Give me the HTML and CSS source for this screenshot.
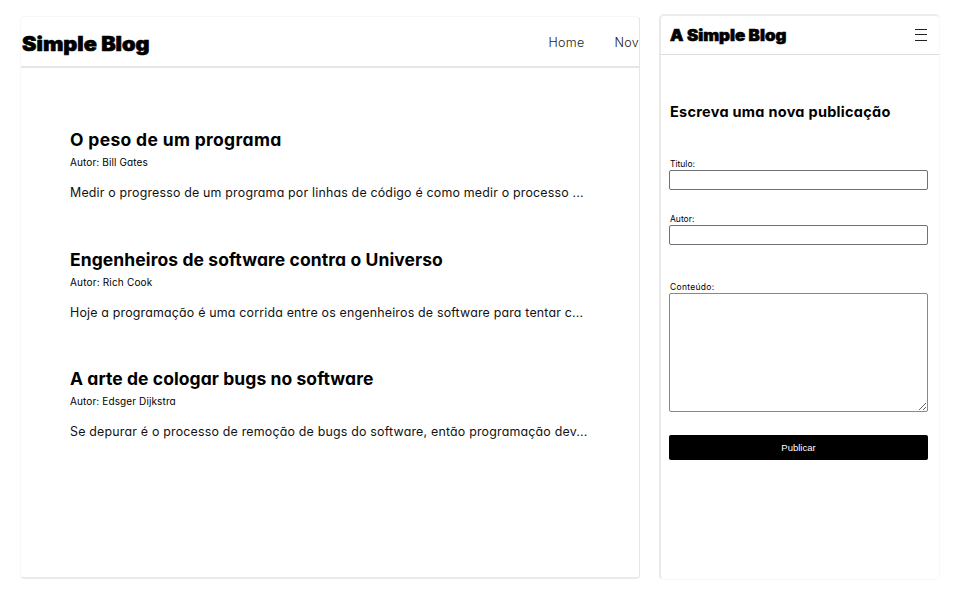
FILE: index.html
```html
<!DOCTYPE html>
<html lang="pt-BR">
<head>
<meta charset="utf-8">
<title>A Simple Blog</title>
<link rel="stylesheet" href="styles.css">
</head>
<body>
<main class="desktop">
  <header class="desktop-header">
    <h1 class="logo">Simple Blog</h1>
    <nav class="nav"><span>Home</span><span class="new">Novo</span></nav>
  </header>
  <section class="posts">
    <article class="post">
      <h2 class="t1">O peso de um programa</h2>
      <p class="author a1">Autor: Bill Gates</p>
      <p class="excerpt e1">Medir o progresso de um programa por linhas de código é como medir o processo ...</p>
    </article>
    <article class="post">
      <h2 class="t2">Engenheiros de software contra o Universo</h2>
      <p class="author a2">Autor: Rich Cook</p>
      <p class="excerpt e2">Hoje a programação é uma corrida entre os engenheiros de software para tentar c...</p>
    </article>
    <article class="post">
      <h2 class="t3">A arte de cologar bugs no software</h2>
      <p class="author a3">Autor: Edsger Dijkstra</p>
      <p class="excerpt e3">Se depurar é o processo de remoção de bugs do software, então programação dev...</p>
    </article>
  </section>
</main>
<aside class="mobile">
  <header class="mobile-header">
    <h1 class="logo small">A Simple Blog</h1>
    <svg class="menu" width="12" height="12" viewBox="0 0 12 12"><path d="M0 .5h12M0 5.5h12M0 11.5h12" stroke="#222" fill="none"/></svg>
  </header>
  <form class="form">
    <h2 class="form-title">Escreva uma nova publicação</h2>
    <label for="title">Titulo:</label>
    <input id="title" type="text">
    <label for="author">Autor:</label>
    <input id="author" type="text">
    <label for="content" class="content-label">Conteúdo:</label>
    <textarea id="content"></textarea>
    <button type="button">Publicar</button>
  </form>
</aside>
</body>
</html>
```
FILE: styles.css
```css
* { box-sizing: border-box; }
body {
  margin: 0;
  height: 595px;
  overflow: hidden;
  display: flex;
  align-items: flex-start;
  gap: 20px;
  padding: 14px 20px 0;
  background: #fff;
  color: #000;
  font-family: Inter, sans-serif;
  font-feature-settings: "cv11";
}
h1, h2, p { margin: 0; white-space: nowrap; }
.desktop {
  width: 620px;
  height: 563px;
  margin-top: 2px;
  overflow: hidden;
  border: 1px solid #f8f8f8;
  border-right: 1px solid #e6e6e6;
  border-bottom: 2px solid #ebebeb;
  border-radius: 4px;
}
.desktop-header {
  height: 51px;
  display: flex;
  align-items: center;
  justify-content: space-between;
  border-bottom: 2px solid #e6e6e6;
}
.logo {
  padding: 4px 0 0 1px;
  font-size: 19.5px;
  line-height: 24px;
  font-weight: 900;
  -webkit-text-stroke: .6px #000;
  transform: scaleX(1.11);
  transform-origin: left;
}
.nav {
  display: flex;
  width: 90.5px;
  gap: 30px;
  padding-top: 1px;
  font-size: 12.5px;
  letter-spacing: .3px;
  font-weight: 300;
  color: #222;
}
.posts { padding: 59px 0 0 49px; }
.post { height: 119.7px; }
.post h2 { font-size: 17.5px; line-height: 26px; font-weight: 700; }
.post .author { margin-top: 1px; font-size: 10px; line-height: 16px; font-weight: 400; }
.post .excerpt { margin-top: 13px; font-size: 12.4px; line-height: 20px; font-weight: 400; color: #111; }
.t1 { letter-spacing: .33px; }
.t2 { letter-spacing: .09px; }
.t3 { letter-spacing: .07px; }
.a1, .a3 { letter-spacing: .12px; }
.a2 { letter-spacing: .18px; }
.e1 { letter-spacing: .19px; }
.e2 { letter-spacing: .19px; }
.e3 { letter-spacing: .2px; }
.mobile {
  width: 281px;
  height: 566px;
  margin-left: -1px;
  border: 1px solid #f8f8f8;
  border-top: 2px solid #ececec;
  border-left: 2px solid #e9e9e9;
  border-radius: 5px;
}
.mobile-header {
  height: 39px;
  display: flex;
  align-items: center;
  justify-content: space-between;
  padding: 0 12px 0 8px;
  border-bottom: 1px solid #ddd;
}
.small { padding-top: 2px; font-size: 15.5px; line-height: 20px; transform: scaleX(1.09); }
.form { display: flex; flex-direction: column; padding: 45px 11px 0 8px; }
.form-title { margin: 0 0 34px 1px; font-size: 14.5px; line-height: 24px; letter-spacing: .27px; }
label { margin-left: 1px; font-size: 8.5px; line-height: 13px; height: 12px; font-weight: 400; }
input {
  width: 100%;
  height: 20px;
  margin: 0 0 23px;
  border: 1px solid #707078;
  border-radius: 2px;
}
.content-label { margin-top: 13px; letter-spacing: .3px; }
textarea {
  height: 119px;
  border: 1px solid #888;
  border-radius: 2px;
}
button {
  height: 25px;
  margin-top: 23px;
  border: 0;
  border-radius: 2px;
  background: #000;
  color: #fff;
  font: 9.5px "Liberation Sans", sans-serif;
}
```
